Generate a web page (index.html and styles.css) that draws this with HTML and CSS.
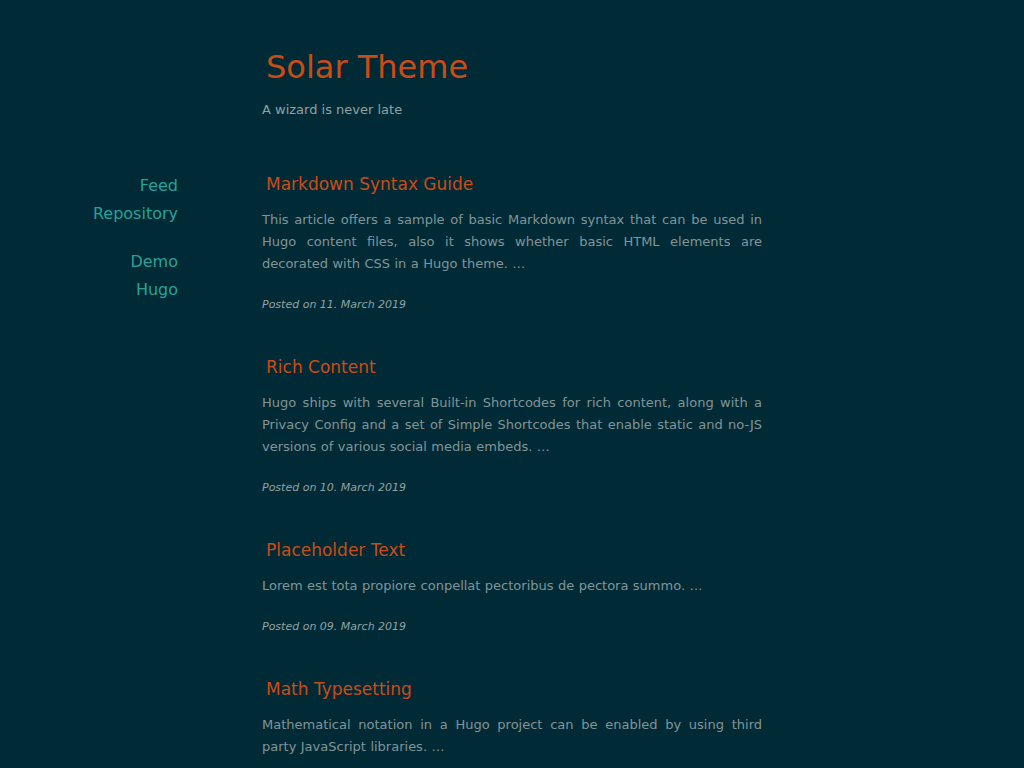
FILE: index.html
```html
<!DOCTYPE html>
<html lang="en">
<head>
<meta charset="utf-8">
<title>Solar Theme</title>
<link rel="stylesheet" href="styles.css">
</head>
<body>
<div class="page">
  <header class="site-header">
    <h1 class="site-title">Solar Theme</h1>
    <p class="tagline">A wizard is never late</p>
  </header>
  <div class="layout">
    <nav class="sidebar">
      <ul class="nav-group">
        <li><a href="#">Feed</a></li>
        <li><a href="#">Repository</a></li>
      </ul>
      <ul class="nav-group">
        <li><a href="#">Demo</a></li>
        <li><a href="#">Hugo</a></li>
      </ul>
    </nav>
    <main class="posts">
      <article class="post">
        <h2 class="post-title">Markdown Syntax Guide</h2>
        <p class="summary">This article offers a sample of basic Markdown syntax that can be used in Hugo content files, also it shows whether basic HTML elements are decorated with CSS in a Hugo theme. …</p>
        <p class="meta">Posted on 11. March 2019</p>
      </article>
      <article class="post">
        <h2 class="post-title">Rich Content</h2>
        <p class="summary">Hugo ships with several Built-in Shortcodes for rich content, along with a Privacy Config and a set of Simple Shortcodes that enable static and no-JS versions of various social media embeds. …</p>
        <p class="meta">Posted on 10. March 2019</p>
      </article>
      <article class="post">
        <h2 class="post-title">Placeholder Text</h2>
        <p class="summary">Lorem est tota propiore conpellat pectoribus de pectora summo. …</p>
        <p class="meta">Posted on 09. March 2019</p>
      </article>
      <article class="post">
        <h2 class="post-title">Math Typesetting</h2>
        <p class="summary">Mathematical notation in a Hugo project can be enabled by using third party JavaScript libraries. …</p>
        <p class="meta">Posted on 08. March 2019</p>
      </article>
    </main>
  </div>
</div>
</body>
</html>
```
FILE: styles.css
```css
html, body {
  margin: 0;
  padding: 0;
  background: #002b36;
}
body {
  font-family: "DejaVu Sans", Verdana, sans-serif;
  color: #839496;
  font-size: 13px;
}
.page {
  padding-top: 44px;
}
.site-header {
  margin-left: 262px;
  width: 500px;
}
.site-title {
  margin: 0 0 0 4px;
  font-size: 32px;
  font-weight: normal;
  line-height: 46px;
  color: #cb4b16;
}
.tagline {
  margin: 9px 0 0 0;
  line-height: 22px;
  color: #93a1a1;
}
.layout {
  display: flex;
  margin-top: 50px;
}
.sidebar {
  width: 178px;
  text-align: right;
  font-size: 16px;
  padding-top: 1px;
}
.nav-group {
  list-style: none;
  margin: 0 0 20px 0;
  padding: 0;
}
.nav-group li {
  line-height: 28px;
}
.nav-group a {
  color: #2aa198;
  text-decoration: none;
}
.posts {
  margin-left: 84px;
  width: 500px;
}
.post {
  margin-bottom: 40px;
}
.post-title {
  margin: 0 0 0 4px;
  font-size: 17px;
  font-weight: normal;
  line-height: 26px;
  color: #cb4b16;
}
.summary {
  margin: 12px 0 0 0;
  line-height: 22px;
  text-align: justify;
  word-spacing: 0.3px;
}
.meta {
  margin: 21px 0 0 0;
  font-size: 11px;
  font-style: italic;
  line-height: 18px;
  color: #93a1a1;
}
```
